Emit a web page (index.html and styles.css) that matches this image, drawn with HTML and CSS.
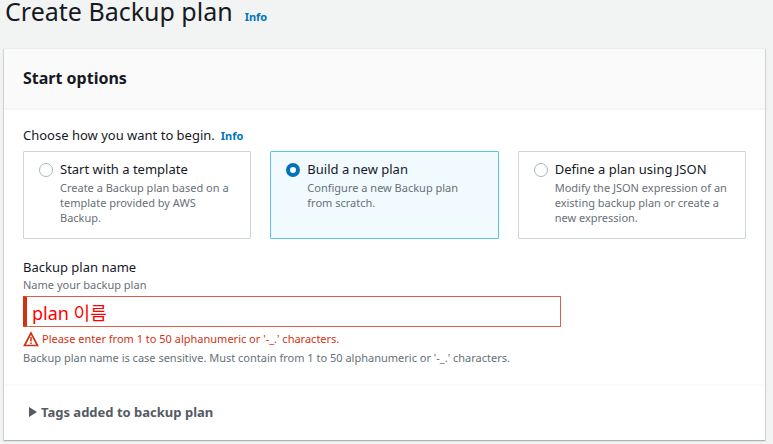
FILE: index.html
```html
<!DOCTYPE html>
<html lang="en">
<head>
    <meta charset="UTF-8">
    <title>Create Backup plan</title>
    <link rel="stylesheet" href="styles.css">
</head>
<body>
    <header class="page-header">
        <h1>Create Backup plan</h1>
        <a class="info" href="#">Info</a>
    </header>

    <form class="card">
        <div class="card-header">
            <h2>Start options</h2>
        </div>

        <div class="card-body">
            <div class="question">
                <span id="start-label">Choose how you want to begin.</span>
                <a class="info" href="#">Info</a>
            </div>
            <div class="tiles" role="radiogroup" aria-labelledby="start-label">
                <label class="tile">
                    <input type="radio" name="start">
                    <span class="tile-text">
                        <span class="tile-title">Start with a template</span>
                        <span class="hint">Create a Backup plan based on a template provided by AWS Backup.</span>
                    </span>
                </label>
                <label class="tile selected">
                    <input type="radio" name="start" checked>
                    <span class="tile-text">
                        <span class="tile-title">Build a new plan</span>
                        <span class="hint">Configure a new Backup plan from scratch.</span>
                    </span>
                </label>
                <label class="tile">
                    <input type="radio" name="start">
                    <span class="tile-text">
                        <span class="tile-title">Define a plan using JSON</span>
                        <span class="hint">Modify the JSON expression of an existing backup plan or create a new expression.</span>
                    </span>
                </label>
            </div>

            <div class="field">
                <label for="plan-name">Backup plan name</label>
                <span class="hint">Name your backup plan</span>
                <input type="text" id="plan-name" value="plan 이름">
                <div class="error">
                    <svg width="16" height="16" viewBox="0 0 16 16" fill="none" stroke="currentColor">
                        <path d="M8 2L1.500 14.500H14.500Z" stroke-width="1.700"/>
                        <path d="M8 6V10.500M8 11.500V13" stroke-width="1.500"/>
                    </svg>
                    <span>Please enter from 1 to 50 alphanumeric or '-_.' characters.</span>
                </div>
                <span class="hint">Backup plan name is case sensitive. Must contain from 1 to 50 alphanumeric or '-_.' characters.</span>
            </div>
        </div>

        <button type="button" class="expander">
            <svg width="8" height="10" viewBox="0 0 8 10"><path d="M0 0L8 5L0 10Z" fill="currentColor"/></svg>
            Tags added to backup plan
        </button>
    </form>
</body>
</html>
```
FILE: styles.css
```css
* {
    box-sizing: border-box;
}

body {
    margin: 0;
    padding: 0 8px 4px 4px;
    background-color: #f2f3f3;
    color: #16191f;
    font-family: "Noto Sans", "Noto Sans CJK KR", sans-serif;
    font-size: 13px;
    line-height: 20px;
}

h1, h2 {
    margin: 0;
}

h1 {
    font-size: 25px;
    font-weight: 400;
    line-height: 22px;
}

h2 {
    font-size: 16px;
    font-weight: 700;
    line-height: 20px;
}

.info {
    color: #0073bb;
    font-size: 11px;
    font-weight: 700;
    text-decoration: none;
}

.page-header {
    display: flex;
    align-items: baseline;
    gap: 12px;
    height: 48px;
    padding-left: 1px;
}

.card {
    background-color: #ffffff;
    border-top: 1px solid #eaeded;
    box-shadow: 0 1px 1px #aab7b8, 1px 1px 1px #d5dbdb, -1px 1px 1px #d5dbdb;
}

.card-header {
    padding: 19px 19px 20px;
    background-color: #fafafa;
    border-bottom: 2px solid #f5f5f5;
}

.card-body {
    padding: 15px 19px 19px;
}

.question {
    display: flex;
    align-items: baseline;
    gap: 6px;
    margin-bottom: 5px;
}

.tiles {
    display: grid;
    grid-template-columns: repeat(3, 1fr);
    gap: 19px;
}

.tile {
    display: flex;
    gap: 7px;
    min-height: 88px;
    padding: 7px 15px 10px;
    border: 1px solid #cdd6d6;
    border-radius: 1px;
}

.tile.selected {
    background-color: #f1faff;
    border-color: #5cc6de;
}

.tile input {
    appearance: none;
    flex: none;
    width: 14px;
    height: 14px;
    margin: 4px 0 0;
    border: 1px solid #aab7b8;
    border-radius: 50%;
    background-color: #ffffff;
}

.tile input:checked {
    border: 4px solid #0073bb;
}

.tile-title {
    display: block;
    margin-bottom: 1px;
}

.hint {
    display: block;
    color: #687078;
    font-size: 11px;
    line-height: 15px;
}

.field {
    margin-top: 18px;
}

.field label {
    display: block;
}

.field input {
    display: block;
    width: 538px;
    max-width: 100%;
    height: 31px;
    margin: 4px 0;
    padding: 0 5px;
    border: 1px solid #d9604b;
    border-left: 4px solid #d13212;
    border-radius: 1px;
    background-color: #ffffff;
    color: #ff0000;
    font-family: "Noto Sans", "Noto Sans CJK KR", sans-serif;
    font-size: 18px;
}

.error {
    display: flex;
    align-items: center;
    gap: 3px;
    margin-bottom: 3px;
    color: #d13212;
    font-size: 11px;
    line-height: 16px;
}

.expander {
    display: flex;
    align-items: center;
    gap: 4px;
    width: 100%;
    padding: 16px 25px 18px;
    border: 0;
    border-top: 2px solid #fafafa;
    background: none;
    color: #545b64;
    font-family: inherit;
    font-size: 13px;
    font-weight: 700;
    line-height: 20px;
}
```
